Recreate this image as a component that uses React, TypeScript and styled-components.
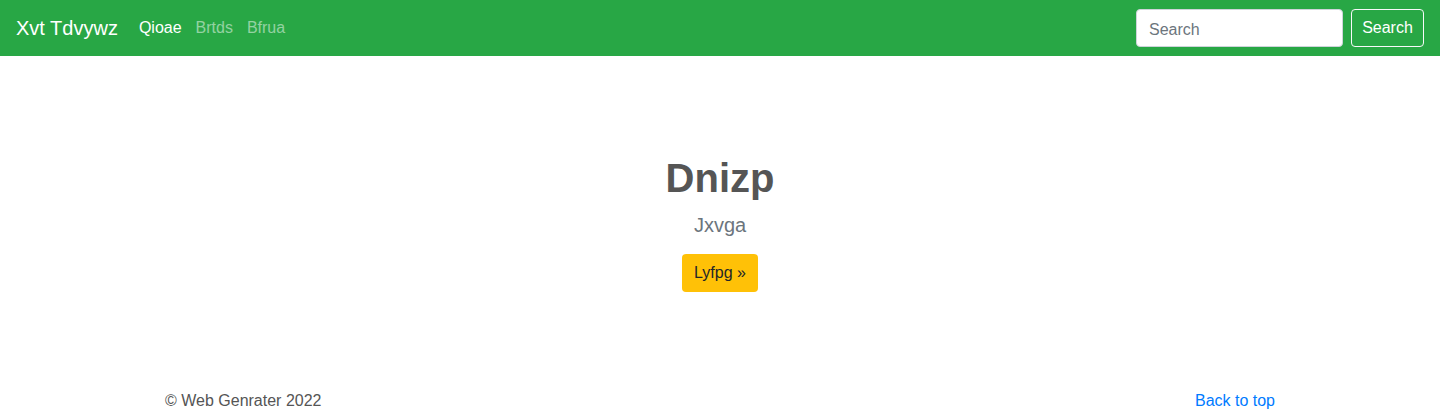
import styled, { createGlobalStyle } from "styled-components";

const GlobalStyle = createGlobalStyle`
  * {
    box-sizing: border-box;
  }
  body {
    margin: 0;
    font-family: "Liberation Sans", Arial, sans-serif;
    font-size: 16px;
    line-height: 1.5;
    color: #555;
    background: #fff;
  }
`;

const Navbar = styled.nav`
  display: flex;
  align-items: center;
  justify-content: space-between;
  height: 56px;
  padding: 0 16px;
  background-color: #28a745;
`;

const NavLeft = styled.div`
  display: flex;
  align-items: center;
`;

const Brand = styled.a`
  font-size: 20px;
  line-height: 30px;
  color: #fff;
  text-decoration: none;
  margin-right: 14px;
  padding: 5px 0;
`;

const NavLinks = styled.ul`
  display: flex;
  list-style: none;
  margin: 0;
  padding: 0;
`;

const NavLink = styled.a<{ $active?: boolean }>`
  display: block;
  padding: 8px 7px;
  color: ${(p) => (p.$active ? "#fff" : "rgba(255, 255, 255, 0.5)")};
  text-decoration: none;
`;

const SearchForm = styled.form`
  display: flex;
  align-items: center;
  gap: 8px;
`;

const SearchInput = styled.input`
  width: 207px;
  height: 38px;
  padding: 8px 12px 4px;
  font-family: inherit;
  font-size: 16px;
  line-height: 24px;
  color: #495057;
  background: #fff;
  border: 1px solid #ced4da;
  border-radius: 4px;
  &::placeholder {
    color: #6c757d;
  }
  &:focus {
    outline: none;
  }
`;

const OutlineButton = styled.button`
  width: 73px;
  height: 38px;
  padding: 6px 0;
  font-family: inherit;
  font-size: 16px;
  line-height: 24px;
  color: #fff;
  background: transparent;
  border: 1px solid #f8f9fa;
  border-radius: 4px;
`;

const Hero = styled.section`
  display: flex;
  flex-direction: column;
  align-items: center;
  padding: 98px 16px 48px;
  text-align: center;
`;

const Heading = styled.h1`
  margin: 0 0 8px;
  font-size: 40px;
  line-height: 48px;
  font-weight: 700;
  color: #555;
`;

const Lead = styled.p`
  margin: 0 0 14px;
  font-size: 20px;
  line-height: 30px;
  font-weight: 300;
  color: #6c757d;
`;

const WarningButton = styled.a`
  display: inline-block;
  height: 38px;
  padding: 7px 12px 5px;
  line-height: 24px;
  color: #212529;
  background-color: #ffc107;
  border-radius: 4px;
  text-decoration: none;
`;

const Footer = styled.footer`
  display: flex;
  justify-content: space-between;
  width: 1140px;
  margin: 0 auto;
  padding: 49px 15px 47px;
  color: #555;
`;

const TopLink = styled.a`
  color: #007bff;
  text-decoration: none;
`;

export default function App() {
  return (
    <>
      <GlobalStyle />
      <Navbar>
        <NavLeft>
          <Brand href="#">Xvt Tdvywz</Brand>
          <NavLinks>
            <li>
              <NavLink href="#" $active>
                Qioae
              </NavLink>
            </li>
            <li>
              <NavLink href="#">Brtds</NavLink>
            </li>
            <li>
              <NavLink href="#">Bfrua</NavLink>
            </li>
          </NavLinks>
        </NavLeft>
        <SearchForm onSubmit={(e) => e.preventDefault()}>
          <SearchInput type="search" placeholder="Search" />
          <OutlineButton type="submit">Search</OutlineButton>
        </SearchForm>
      </Navbar>
      <Hero>
        <Heading>Dnizp</Heading>
        <Lead>Jxvga</Lead>
        <WarningButton href="#">Lyfpg »</WarningButton>
      </Hero>
      <Footer>
        <span>© Web Genrater 2022</span>
        <TopLink href="#">Back to top</TopLink>
      </Footer>
    </>
  );
}
